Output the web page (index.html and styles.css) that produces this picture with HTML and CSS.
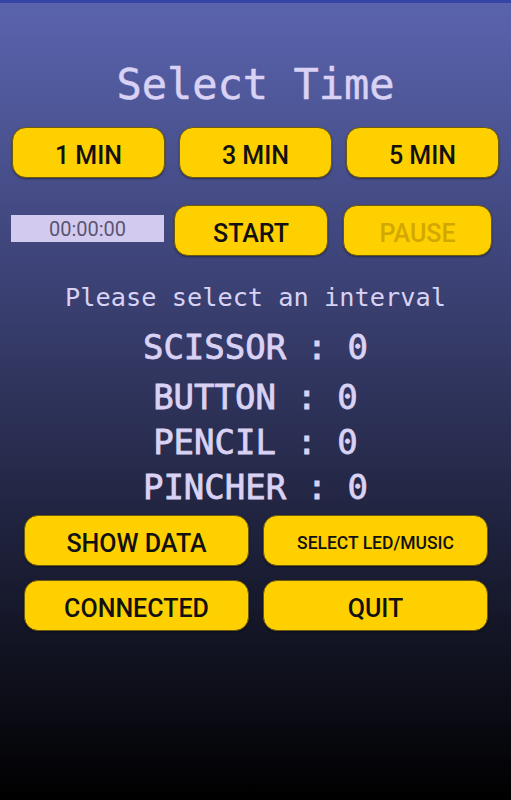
FILE: index.html
```html
<!DOCTYPE html>
<html>
  <head>
    <title>Timer</title>
    <link rel="stylesheet" href="styles.css">
  </head>
  <body>
    <div class="topbar"></div>
    <main class="screen">
      <h1 class="title">Select Time</h1>

      <!-- interval choices -->
      <div class="row-three">
        <button class="btn">1 MIN</button>
        <button class="btn">3 MIN</button>
        <button class="btn">5 MIN</button>
      </div>

      <!-- timer + controls -->
      <div class="row-timer">
        <div class="timer">00:00:00</div>
        <button class="btn">START</button>
        <button class="btn btn-disabled">PAUSE</button>
      </div>

      <p class="hint">Please select an interval</p>

      <div class="counts">
        <div class="count count-first">SCISSOR : 0</div>
        <div class="count">BUTTON : 0</div>
        <div class="count">PENCIL : 0</div>
        <div class="count">PINCHER : 0</div>
      </div>

      <div class="row-two">
        <button class="btn">SHOW DATA</button>
        <button class="btn btn-small">SELECT LED/MUSIC</button>
        <button class="btn">CONNECTED</button>
        <button class="btn">QUIT</button>
      </div>
    </main>
  </body>
</html>
```

FILE: styles.css
```css
/* Page background: blue fading to black */
body {
  margin: 0;
  height: 800px;
  overflow: hidden;
  background: linear-gradient(#5a64ae 0%, #3c4275 35%, #000 100%);
  font-family: Roboto, "Liberation Sans", sans-serif;
}

/* Thin status strip along the top */
.topbar {
  height: 3px;
  background-color: #3545a5;
}

.screen {
  display: flex;
  flex-direction: column;
}

/* Heading */
.title {
  margin: 57px 0 0;
  font-family: "DejaVu Sans Mono", monospace;
  font-weight: normal;
  font-size: 42px;
  line-height: 50px;
  text-align: center;
  color: #d9d2f4;
  -webkit-text-stroke: 0.5px #d9d2f4;
}

/* Yellow rounded buttons */
.btn {
  height: 51px;
  margin: 0;
  padding: 5px 0 0;
  background-color: #ffd000;
  border: 1px solid #6b5a10;
  border-radius: 14px;
  font-family: Roboto, "Liberation Sans", sans-serif;
  font-weight: 500;
  font-size: 25px;
  color: #111;
  box-shadow: 0 1px 2px rgba(0, 0, 0, 0.4);
}

.btn-disabled {
  color: #d2a800;
}

.btn-small {
  font-size: 17.5px;
}

/* Row of three interval buttons */
.row-three {
  display: grid;
  grid-template-columns: repeat(3, 153px);
  column-gap: 14px;
  margin-top: 17px;
  padding-left: 12px;
}

/* Timer display with start / pause */
.row-timer {
  display: grid;
  grid-template-columns: 153px 154px 154px;
  column-gap: 10px;
  align-items: center;
  margin-top: 27px;
  padding-left: 11px;
}

.row-timer .btn:last-child {
  margin-left: 5px;
}

.timer {
  height: 27px;
  margin-top: -5px;
  background-color: #d3cbef;
  color: #5a5470;
  font-size: 20px;
  line-height: 29px;
  text-align: center;
}

.hint {
  margin: 27px 0 0;
  font-family: "DejaVu Sans Mono", monospace;
  font-size: 25.3px;
  line-height: 30px;
  text-align: center;
  color: #d9d2f4;
}

/* Tool counters */
.counts {
  margin-top: 12px;
  font-family: "DejaVu Sans Mono", monospace;
  font-size: 34px;
  line-height: 45px;
  text-align: center;
  color: #d9d2f4;
  -webkit-text-stroke: 0.8px #d9d2f4;
}

.count-first {
  margin-bottom: 5px;
}

/* Bottom 2x2 buttons */
.row-two {
  display: grid;
  grid-template-columns: 225px 225px;
  gap: 14px 14px;
  margin-top: 5px;
  padding-left: 24px;
}
```
